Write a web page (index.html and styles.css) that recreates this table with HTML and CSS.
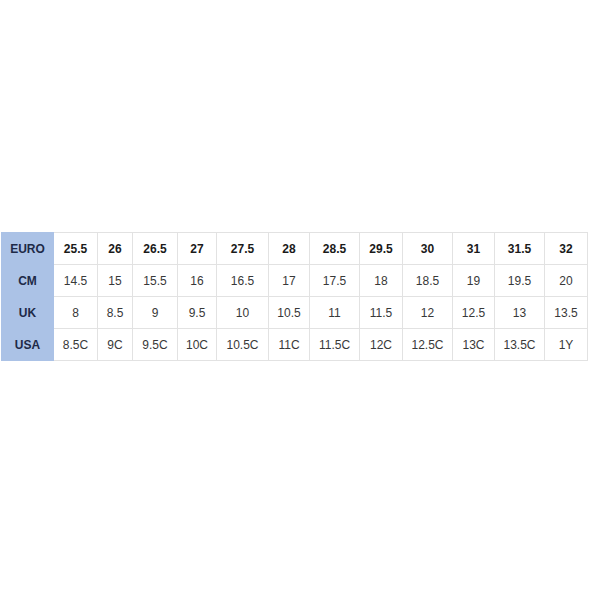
FILE: index.html
```html
<!DOCTYPE html>
<html>
<head>
<meta charset="utf-8">
<link rel="stylesheet" href="styles.css">
</head>
<body>
<main class="page">
  <table class="sizes">
    <colgroup>
      <col style="width:52px"><col style="width:44px"><col style="width:35px"><col style="width:45px"><col style="width:39px"><col style="width:52px"><col style="width:41px"><col style="width:50px"><col style="width:43px"><col style="width:50px"><col style="width:42px"><col style="width:50px"><col style="width:43px">
    </colgroup>
    <tr class="head">
      <th>EURO</th><td>25.5</td><td>26</td><td>26.5</td><td>27</td><td>27.5</td><td>28</td><td>28.5</td><td>29.5</td><td>30</td><td>31</td><td>31.5</td><td>32</td>
    </tr>
    <tr>
      <th>CM</th><td>14.5</td><td>15</td><td>15.5</td><td>16</td><td>16.5</td><td>17</td><td>17.5</td><td>18</td><td>18.5</td><td>19</td><td>19.5</td><td>20</td>
    </tr>
    <tr>
      <th>UK</th><td>8</td><td>8.5</td><td>9</td><td>9.5</td><td>10</td><td>10.5</td><td>11</td><td>11.5</td><td>12</td><td>12.5</td><td>13</td><td>13.5</td>
    </tr>
    <tr>
      <th>USA</th><td>8.5C</td><td>9C</td><td>9.5C</td><td>10C</td><td>10.5C</td><td>11C</td><td>11.5C</td><td>12C</td><td>12.5C</td><td>13C</td><td>13.5C</td><td>1Y</td>
    </tr>
  </table>
</main>
</body>
</html>
```
FILE: styles.css
```css
html, body {
  margin: 0;
  padding: 0;
  background: #ffffff;
}
.page {
  height: 590px;
  display: flex;
  align-items: center;
  justify-content: flex-start;
  padding-left: 1px;
  font-family: "Liberation Sans", Arial, sans-serif;
}
.sizes {
  border-collapse: collapse;
  table-layout: fixed;
  width: 586px;
  margin-top: 3px;
}
.sizes th,
.sizes td {
  height: 31px;
  padding: 0;
  border: 1px solid #e2e2e2;
  text-align: center;
  vertical-align: middle;
  font-size: 12px;
  color: #383838;
  white-space: nowrap;
}
.sizes th {
  background: #abc2e6;
  color: #1e2a48;
  font-weight: bold;
  border-color: #abc2e6;
}
.sizes .head td {
  font-weight: bold;
  color: #1a1a1a;
}
```
